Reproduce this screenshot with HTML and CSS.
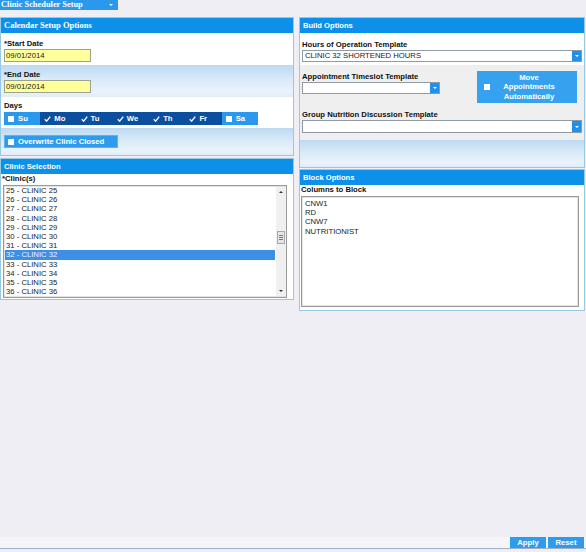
FILE: index.html
```html
<!DOCTYPE html>
<html>
<head>
<meta charset="utf-8">
<link rel="stylesheet" href="styles.css">
</head>
<body>
<div class="page">
  <div class="topbar">
    <div class="menu-btn"><span class="menu-text">Clinic Scheduler Setup</span><span class="caret"></span></div>
  </div>
  <div class="main">
    <div class="col">
      <section class="panel cal">
        <div class="ph serif">Calendar Setup Options</div>
        <div class="row r-start">
          <div class="lbl">*Start Date</div>
          <div class="date">09/01/2014</div>
        </div>
        <div class="row r-end grad">
          <div class="lbl">*End Date</div>
          <div class="date">09/01/2014</div>
        </div>
        <div class="row r-days">
          <div class="lbl">Days</div>
          <div class="days">
            <div class="day off"><span class="cb"></span>Su</div>
            <div class="day on"><svg class="chk" viewBox="0 0 8 7"><path d="M0.8 3.8 L3 6 L7.2 0.8" fill="none" stroke="#fff" stroke-width="1.6"/></svg>Mo</div>
            <div class="day on"><svg class="chk" viewBox="0 0 8 7"><path d="M0.8 3.8 L3 6 L7.2 0.8" fill="none" stroke="#fff" stroke-width="1.6"/></svg>Tu</div>
            <div class="day on"><svg class="chk" viewBox="0 0 8 7"><path d="M0.8 3.8 L3 6 L7.2 0.8" fill="none" stroke="#fff" stroke-width="1.6"/></svg>We</div>
            <div class="day on"><svg class="chk" viewBox="0 0 8 7"><path d="M0.8 3.8 L3 6 L7.2 0.8" fill="none" stroke="#fff" stroke-width="1.6"/></svg>Th</div>
            <div class="day on"><svg class="chk" viewBox="0 0 8 7"><path d="M0.8 3.8 L3 6 L7.2 0.8" fill="none" stroke="#fff" stroke-width="1.6"/></svg>Fr</div>
            <div class="day off"><span class="cb"></span>Sa</div>
          </div>
        </div>
        <div class="row r-ow grad">
          <div class="btn ow"><span class="cb"></span>Overwrite Clinic Closed</div>
        </div>
      </section>
      <section class="panel clinic">
        <div class="ph">Clinic Selection</div>
        <div class="lbl lbl-tight">*Clinic(s)</div>
        <div class="listbox clist">
          <div class="items">
            <div class="item">25 - CLINIC 25</div>
            <div class="item">26 - CLINIC 26</div>
            <div class="item">27 - CLINIC 27</div>
            <div class="item">28 - CLINIC 28</div>
            <div class="item">29 - CLINIC 29</div>
            <div class="item">30 - CLINIC 30</div>
            <div class="item">31 - CLINIC 31</div>
            <div class="item sel">32 - CLINIC 32</div>
            <div class="item">33 - CLINIC 33</div>
            <div class="item">34 - CLINIC 34</div>
            <div class="item">35 - CLINIC 35</div>
            <div class="item">36 - CLINIC 36</div>
          </div>
          <div class="sb">
            <div class="sb-arrow up"></div>
            <div class="sb-track">
              <div class="sb-thumb"><span></span><span></span><span></span></div>
            </div>
            <div class="sb-arrow down"></div>
          </div>
        </div>
      </section>
    </div>
    <div class="col">
      <section class="panel build">
        <div class="ph">Build Options</div>
        <div class="b-hours">
          <div class="lbl">Hours of Operation Template</div>
          <div class="select"><span class="sel-text">CLINIC 32 SHORTENED HOURS</span><span class="sel-arrow"></span></div>
        </div>
        <div class="b-gray">
          <div class="b-appt">
            <div class="appt-col">
              <div class="lbl">Appointment Timeslot Template</div>
              <div class="select"><span class="sel-text"></span><span class="sel-arrow"></span></div>
            </div>
            <div class="btn move"><span class="cb"></span><span class="move-text">Move<br>Appointments<br>Automatically</span></div>
          </div>
          <div class="lbl">Group Nutrition Discussion Template</div>
          <div class="select"><span class="sel-text"></span><span class="sel-arrow"></span></div>
        </div>
        <div class="b-grad grad"></div>
      </section>
      <section class="panel block">
        <div class="ph">Block Options</div>
        <div class="lbl lbl-tight">Columns to Block</div>
        <div class="listbox blist">
          <div class="items">
            <div class="item">CNW1</div>
            <div class="item">RD</div>
            <div class="item">CNW7</div>
            <div class="item">NUTRITIONIST</div>
          </div>
        </div>
      </section>
    </div>
  </div>
  <div class="footer">
    <div class="btn fbtn">Apply</div>
    <div class="btn fbtn">Reset</div>
  </div>
</div>
</body>
</html>
```
FILE: styles.css
```css
* { box-sizing: border-box; }
html, body { margin: 0; padding: 0; }
body {
  background: #eeeef4;
  font-family: "Liberation Sans", Arial, sans-serif;
  font-size: 7.7px;
  color: #111;
}
.page {
  width: 586px;
  height: 552px;
  display: flex;
  flex-direction: column;
  overflow: hidden;
}
.topbar { height: 10px; }
.menu-btn {
  width: 118px;
  height: 10px;
  background: #2a98ec;
  display: flex;
  align-items: center;
  color: #fff;
}
.menu-text {
  font-family: "Liberation Serif", "Times New Roman", serif;
  font-weight: bold;
  font-size: 8.4px;
  line-height: 10px;
  margin-left: 1px;
  white-space: nowrap;
}
.caret {
  margin-left: auto;
  margin-right: 5px;
  width: 0; height: 0;
  border-left: 2px solid transparent;
  border-right: 2px solid transparent;
  border-top: 2px solid #fff;
}
.main {
  display: grid;
  grid-template-columns: 294px 286px;
  column-gap: 5px;
  margin-top: 7px;
  align-items: start;
}
.col { display: flex; flex-direction: column; }
.panel {
  border: 1px solid #98c9e4;
  background: #fff;
}
.ph {
  height: 15px;
  background: #0c90e9;
  color: #fff;
  font-weight: bold;
  font-size: 7.6px;
  line-height: 15px;
  padding-left: 3px;
  white-space: nowrap;
}
.ph.serif {
  font-family: "Liberation Serif", "Times New Roman", serif;
  font-size: 8.5px;
}
.grad {
  background: linear-gradient(to bottom, #bcd9f2 0%, #d9eaf8 45%, #eaf3fb 85%, #dfecf8 100%);
}
.lbl {
  font-weight: bold;
  line-height: 10px;
  white-space: nowrap;
}
.row { padding: 0 3px; }
.r-start { height: 32px; padding-top: 6px; }
.r-end { height: 32px; padding-top: 5px; }
.r-days { height: 31px; padding-top: 4px; }
.r-ow { height: 27px; padding-top: 7px; }
.date {
  width: 87px;
  height: 13px;
  background: #ffff9c;
  border: 1px solid #9aa38e;
  line-height: 11px;
  padding-left: 1px;
  color: #222;
}
.days {
  display: flex;
  width: 254px;
  height: 13px;
  margin-top: 1px;
}
.day {
  flex: 1;
  display: flex;
  align-items: center;
  color: #fff;
  font-weight: bold;
  padding-left: 4px;
}
.day.off { background: #2a98ee; }
.day.on { background: #0b4f9e; }
.cb {
  display: inline-block;
  width: 6px;
  height: 6px;
  background: #fff;
  margin-right: 4px;
  flex: none;
}
.chk { width: 7px; height: 6px; margin-right: 3px; flex: none; }
.btn {
  background: #2d9cef;
  color: #fff;
  font-weight: bold;
  display: flex;
  align-items: center;
}
.ow {
  width: 114px;
  height: 13px;
  padding-left: 4px;
  box-shadow: inset 0 0 0 1px #5ab4f4;
  white-space: nowrap;
}
.clinic { margin-top: 2px; height: 142px; }
.lbl-tight { line-height: 10px; padding-left: 1px; }
.listbox {
  background: #fff;
  border: 1px solid #9a9a9a;
  box-shadow: inset 0 0 0 1px #e2e2e2;
  display: flex;
  overflow: hidden;
}
.clist {
  margin: 1px 6px 0 2px;
  height: 113px;
  padding: 0 0 0 1px;
}
.items { flex: 1; }
.item {
  height: 9.2px;
  line-height: 9.2px;
  padding-left: 1px;
  color: #222;
  white-space: nowrap;
}
.item.sel { background: #3d8fe6; color: #eaf3ff; }
.sb {
  width: 10px;
  margin: 1px 0 1px 1px;
  background: #f0f0f0;
  display: flex;
  flex-direction: column;
}
.sb-arrow { height: 10px; display: flex; align-items: center; justify-content: center; }
.sb-arrow.up::before {
  content: "";
  border-left: 2px solid transparent;
  border-right: 2px solid transparent;
  border-bottom: 2px solid #333;
}
.sb-arrow.down::before {
  content: "";
  border-left: 2px solid transparent;
  border-right: 2px solid transparent;
  border-top: 2px solid #333;
}
.sb-track { flex: 1; padding-top: 34px; }
.sb-thumb {
  height: 13px;
  margin: 0 1px;
  background: #e6e6e6;
  border: 1px solid #a8a8a8;
  display: flex;
  flex-direction: column;
  justify-content: center;
  align-items: center;
  gap: 1px;
}
.sb-thumb span { width: 4px; height: 1px; background: #777; }
.build { height: 151px; display: flex; flex-direction: column; }
.b-hours { height: 32px; padding: 7px 2px 0; }
.select {
  height: 12px;
  border: 1px solid #8e9aa6;
  background: #fff;
  display: flex;
}
.sel-text { flex: 1; line-height: 10px; padding-left: 2px; color: #222; white-space: nowrap; }
.sel-arrow {
  width: 9px;
  background: #2290e6;
  display: flex;
  align-items: center;
  justify-content: center;
}
.sel-arrow::before {
  content: "";
  border-left: 2px solid transparent;
  border-right: 2px solid transparent;
  border-top: 2px solid #fff;
}
.b-gray { height: 75px; background: #efefef; padding: 0 2px; }
.b-appt { display: flex; height: 45px; }
.appt-col { width: 138px; padding-top: 7px; }
.appt-col .select { height: 12px; }
.move {
  margin-left: auto;
  margin-right: 5px;
  margin-top: 6px;
  width: 100px;
  height: 32px;
  background: #36a2ef;
  padding-left: 7px;
}
.move-text {
  flex: 1;
  text-align: center;
  line-height: 9.5px;
  margin-right: 13px;
}
.b-gray > .select { height: 13px; }
.b-grad { flex: 1; }
.block { margin-top: 1px; height: 142px; }
.blist {
  margin: 1px 5px 0 1px;
  height: 111px;
  padding: 2px 2px;
}
.footer {
  margin-top: auto;
  margin-bottom: 3px;
  height: 12px;
  background: #f6f6fa;
  border-bottom: 1px solid #9fb0c4;
  display: flex;
  justify-content: flex-end;
  gap: 2px;
  padding-right: 2px;
}
.fbtn {
  width: 36px;
  height: 11px;
  justify-content: center;
  background: #2d9cef;
}
```
